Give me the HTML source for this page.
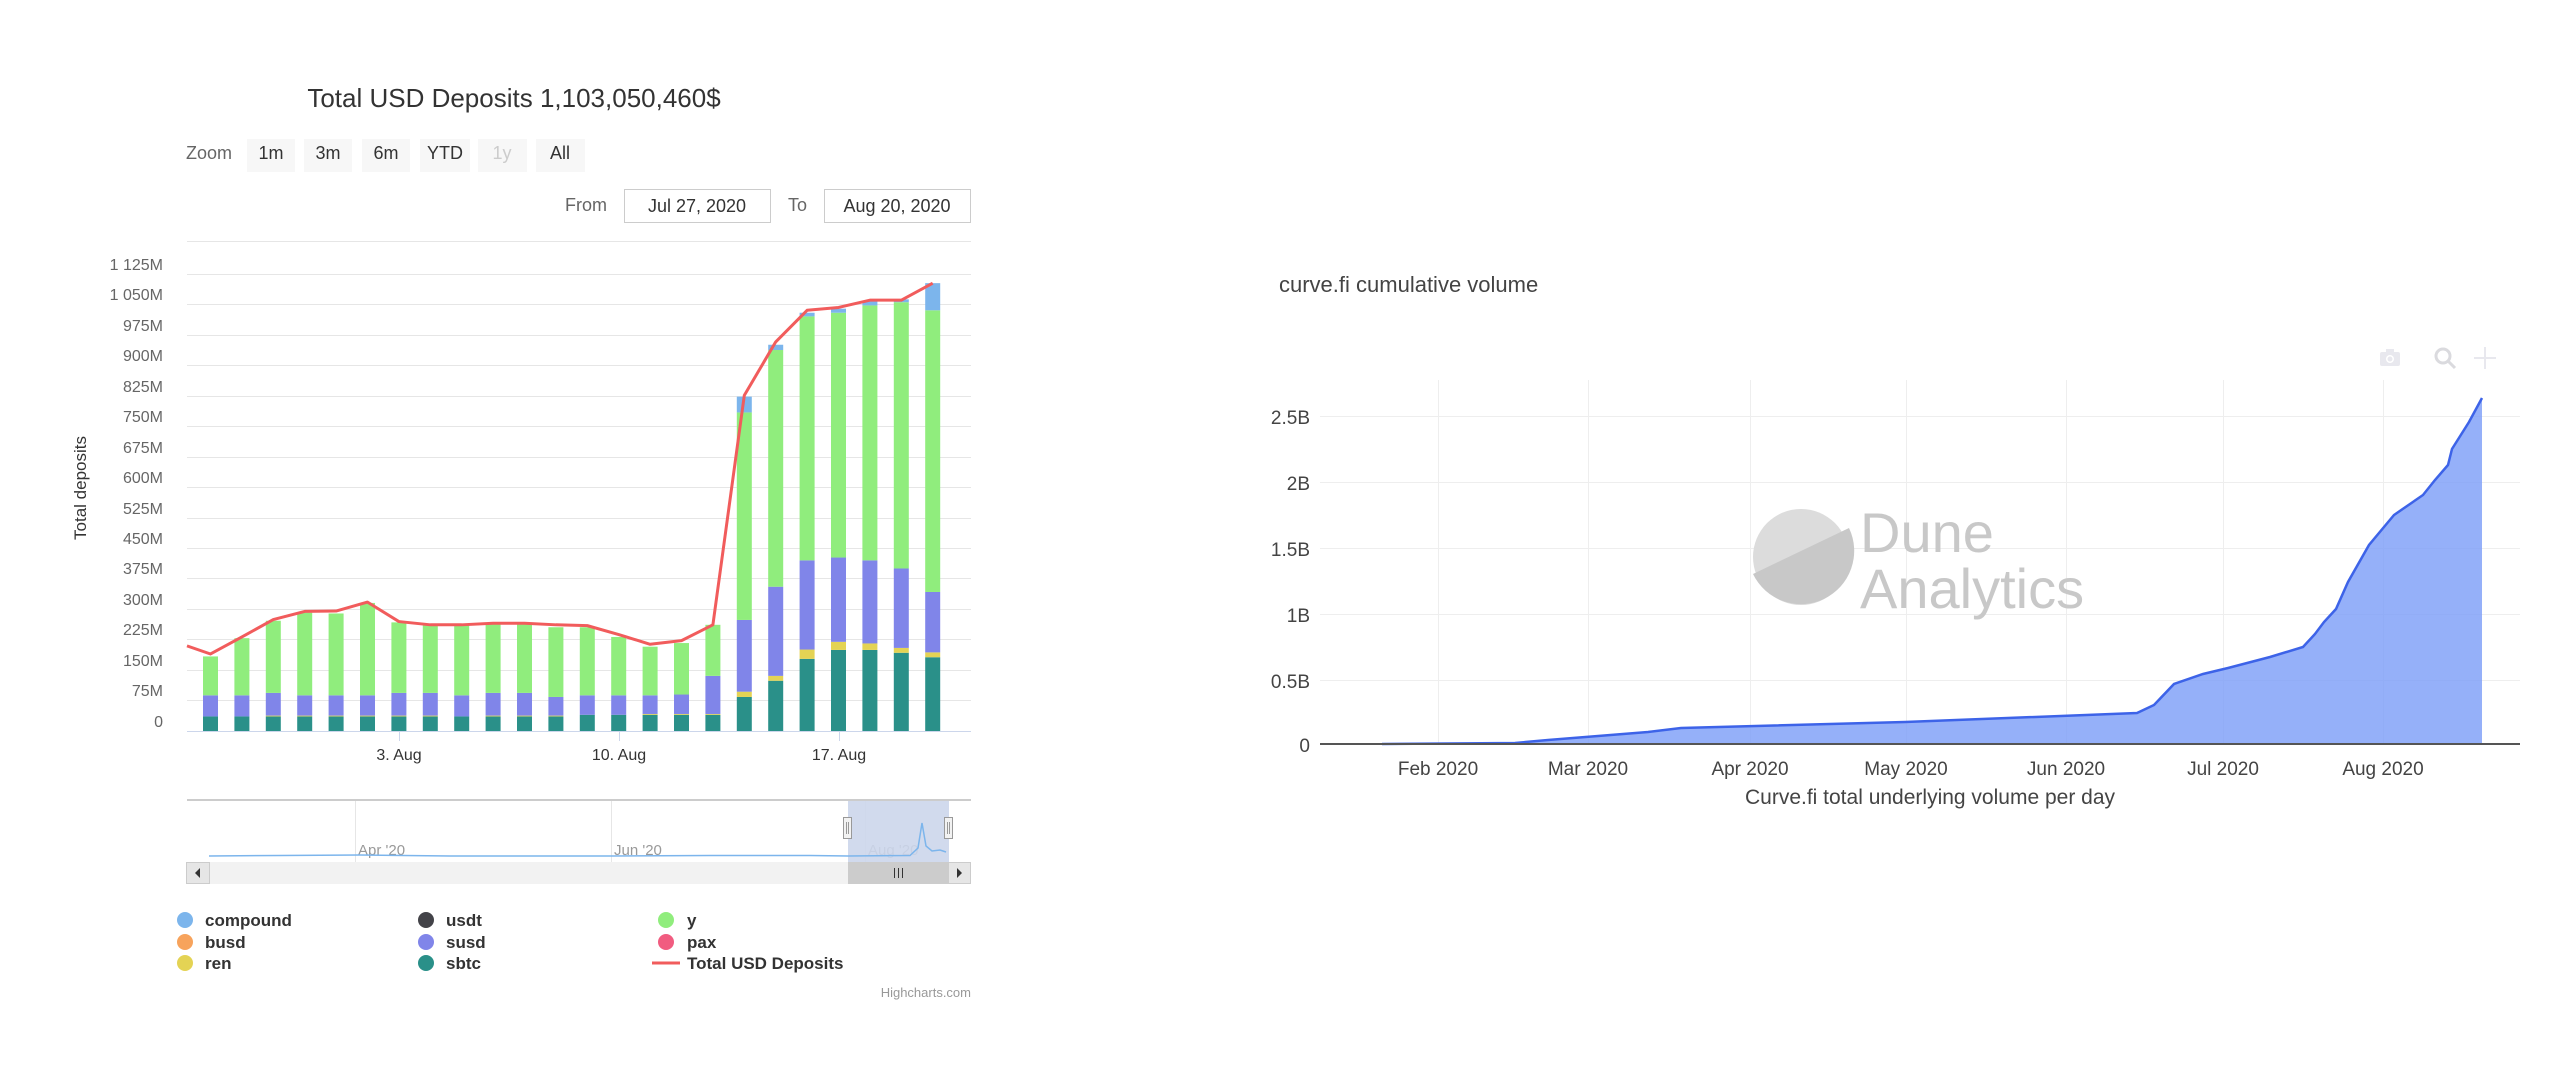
<!DOCTYPE html>
<html><head><meta charset="utf-8"><style>
html,body{margin:0;padding:0;background:#fff;}
svg{display:block;font-family:"Liberation Sans",sans-serif;}
</style></head><body>
<svg width="2552" height="1078" viewBox="0 0 2552 1078" xmlns="http://www.w3.org/2000/svg">
<rect width="2552" height="1078" fill="#fff"/>
<!-- LEFT CHART -->
<text x="514" y="107" text-anchor="middle" font-size="26" fill="#333">Total USD Deposits 1,103,050,460$</text>
<text x="186" y="159" font-size="18" fill="#666">Zoom</text>
<g font-size="18" fill="#333" text-anchor="middle">
<rect x="247" y="139" width="48" height="33" fill="#f7f7f7"/><text x="271" y="159">1m</text>
<rect x="304" y="139" width="48" height="33" fill="#f7f7f7"/><text x="328" y="159">3m</text>
<rect x="362" y="139" width="48" height="33" fill="#f7f7f7"/><text x="386" y="159">6m</text>
<rect x="420" y="139" width="50" height="33" fill="#f7f7f7"/><text x="445" y="159">YTD</text>
<rect x="478" y="139" width="49" height="33" fill="#f7f7f7"/><text x="502" y="159" fill="#ccc">1y</text>
<rect x="536" y="139" width="49" height="33" fill="#f7f7f7"/><text x="560" y="159">All</text>
</g>
<text x="565" y="211" font-size="18" fill="#666">From</text>
<rect x="624.5" y="189.5" width="146" height="33" fill="#fff" stroke="#ccc"/>
<text x="697" y="212" font-size="18" fill="#333" text-anchor="middle">Jul 27, 2020</text>
<text x="788" y="211" font-size="18" fill="#666">To</text>
<rect x="824.5" y="189.5" width="146" height="33" fill="#fff" stroke="#ccc"/>
<text x="897" y="212" font-size="18" fill="#333" text-anchor="middle">Aug 20, 2020</text>
<line x1="187" y1="241.5" x2="971" y2="241.5" stroke="#e6e6e6"/>
<g stroke="#e6e6e6">
<line x1="187" x2="971" y1="274.5" y2="274.5"/><line x1="187" x2="971" y1="304.5" y2="304.5"/><line x1="187" x2="971" y1="335.5" y2="335.5"/><line x1="187" x2="971" y1="365.5" y2="365.5"/><line x1="187" x2="971" y1="396.5" y2="396.5"/><line x1="187" x2="971" y1="426.5" y2="426.5"/><line x1="187" x2="971" y1="457.5" y2="457.5"/><line x1="187" x2="971" y1="487.5" y2="487.5"/><line x1="187" x2="971" y1="518.5" y2="518.5"/><line x1="187" x2="971" y1="548.5" y2="548.5"/><line x1="187" x2="971" y1="578.5" y2="578.5"/><line x1="187" x2="971" y1="609.5" y2="609.5"/><line x1="187" x2="971" y1="639.5" y2="639.5"/><line x1="187" x2="971" y1="670.5" y2="670.5"/><line x1="187" x2="971" y1="700.5" y2="700.5"/>
</g>
<g font-size="16" fill="#666" text-anchor="end">
<text x="163" y="270">1 125M</text><text x="163" y="300">1 050M</text><text x="163" y="331">975M</text><text x="163" y="361">900M</text><text x="163" y="392">825M</text><text x="163" y="422">750M</text><text x="163" y="453">675M</text><text x="163" y="483">600M</text><text x="163" y="514">525M</text><text x="163" y="544">450M</text><text x="163" y="574">375M</text><text x="163" y="605">300M</text><text x="163" y="635">225M</text><text x="163" y="666">150M</text><text x="163" y="696">75M</text><text x="163" y="727">0</text>
</g>
<text transform="translate(86,488) rotate(-90)" font-size="17" fill="#333" text-anchor="middle">Total deposits</text>
<g transform="translate(0,731) scale(1,-0.4053)">
<g id="b">
<rect x="203" y="0" width="15" height="36" fill="#2a9089"/><rect x="203" y="36" width="15" height="52" fill="#8085e9"/><rect x="203" y="88" width="15" height="96" fill="#90ed7d"/>
<rect x="234.4" y="0" width="15" height="36" fill="#2a9089"/><rect x="234.4" y="36" width="15" height="52" fill="#8085e9"/><rect x="234.4" y="88" width="15" height="141" fill="#90ed7d"/>
<rect x="265.8" y="0" width="15" height="36" fill="#2a9089"/><rect x="265.8" y="36" width="15" height="2" fill="#e4d354"/><rect x="265.8" y="38" width="15" height="56" fill="#8085e9"/><rect x="265.8" y="94" width="15" height="178" fill="#90ed7d"/>
<rect x="297.2" y="0" width="15" height="36" fill="#2a9089"/><rect x="297.2" y="36" width="15" height="2" fill="#e4d354"/><rect x="297.2" y="38" width="15" height="50" fill="#8085e9"/><rect x="297.2" y="88" width="15" height="204" fill="#90ed7d"/>
<rect x="328.6" y="0" width="15" height="36" fill="#2a9089"/><rect x="328.6" y="36" width="15" height="2" fill="#e4d354"/><rect x="328.6" y="38" width="15" height="50" fill="#8085e9"/><rect x="328.6" y="88" width="15" height="202" fill="#90ed7d"/>
<rect x="360" y="0" width="15" height="36" fill="#2a9089"/><rect x="360" y="36" width="15" height="2" fill="#e4d354"/><rect x="360" y="38" width="15" height="50" fill="#8085e9"/><rect x="360" y="88" width="15" height="228" fill="#90ed7d"/>
<rect x="391.4" y="0" width="15" height="36" fill="#2a9089"/><rect x="391.4" y="36" width="15" height="2" fill="#e4d354"/><rect x="391.4" y="38" width="15" height="56" fill="#8085e9"/><rect x="391.4" y="94" width="15" height="174" fill="#90ed7d"/>
<rect x="422.8" y="0" width="15" height="36" fill="#2a9089"/><rect x="422.8" y="36" width="15" height="2" fill="#e4d354"/><rect x="422.8" y="38" width="15" height="56" fill="#8085e9"/><rect x="422.8" y="94" width="15" height="168" fill="#90ed7d"/>
<rect x="454.2" y="0" width="15" height="36" fill="#2a9089"/><rect x="454.2" y="36" width="15" height="52" fill="#8085e9"/><rect x="454.2" y="88" width="15" height="174" fill="#90ed7d"/>
<rect x="485.6" y="0" width="15" height="36" fill="#2a9089"/><rect x="485.6" y="36" width="15" height="2" fill="#e4d354"/><rect x="485.6" y="38" width="15" height="56" fill="#8085e9"/><rect x="485.6" y="94" width="15" height="172" fill="#90ed7d"/>
<rect x="517" y="0" width="15" height="36" fill="#2a9089"/><rect x="517" y="36" width="15" height="2" fill="#e4d354"/><rect x="517" y="38" width="15" height="56" fill="#8085e9"/><rect x="517" y="94" width="15" height="172" fill="#90ed7d"/>
<rect x="548.4" y="0" width="15" height="36" fill="#2a9089"/><rect x="548.4" y="36" width="15" height="2" fill="#e4d354"/><rect x="548.4" y="38" width="15" height="46" fill="#8085e9"/><rect x="548.4" y="84" width="15" height="172" fill="#90ed7d"/>
<rect x="579.8" y="0" width="15" height="40" fill="#2a9089"/><rect x="579.8" y="40" width="15" height="48" fill="#8085e9"/><rect x="579.8" y="88" width="15" height="168" fill="#90ed7d"/>
<rect x="611.2" y="0" width="15" height="40" fill="#2a9089"/><rect x="611.2" y="40" width="15" height="48" fill="#8085e9"/><rect x="611.2" y="88" width="15" height="144" fill="#90ed7d"/>
<rect x="642.6" y="0" width="15" height="40" fill="#2a9089"/><rect x="642.6" y="40" width="15" height="2" fill="#e4d354"/><rect x="642.6" y="42" width="15" height="46" fill="#8085e9"/><rect x="642.6" y="88" width="15" height="120" fill="#90ed7d"/>
<rect x="674" y="0" width="15" height="40" fill="#2a9089"/><rect x="674" y="40" width="15" height="2" fill="#e4d354"/><rect x="674" y="42" width="15" height="48" fill="#8085e9"/><rect x="674" y="90" width="15" height="127" fill="#90ed7d"/>
<rect x="705.4" y="0" width="15" height="40" fill="#2a9089"/><rect x="705.4" y="40" width="15" height="2" fill="#e4d354"/><rect x="705.4" y="42" width="15" height="94" fill="#8085e9"/><rect x="705.4" y="136" width="15" height="126" fill="#90ed7d"/>
<rect x="736.8" y="0" width="15" height="84" fill="#2a9089"/><rect x="736.8" y="84" width="15" height="13" fill="#e4d354"/><rect x="736.8" y="97" width="15" height="177" fill="#8085e9"/><rect x="736.8" y="274" width="15" height="512" fill="#90ed7d"/><rect x="736.8" y="786" width="15" height="39" fill="#7cb5ec"/>
<rect x="768.2" y="0" width="15" height="124" fill="#2a9089"/><rect x="768.2" y="124" width="15" height="12" fill="#e4d354"/><rect x="768.2" y="136" width="15" height="220" fill="#8085e9"/><rect x="768.2" y="356" width="15" height="584" fill="#90ed7d"/><rect x="768.2" y="940" width="15" height="13" fill="#7cb5ec"/>
<rect x="799.6" y="0" width="15" height="178" fill="#2a9089"/><rect x="799.6" y="178" width="15" height="23" fill="#e4d354"/><rect x="799.6" y="201" width="15" height="220" fill="#8085e9"/><rect x="799.6" y="421" width="15" height="602" fill="#90ed7d"/><rect x="799.6" y="1023" width="15" height="9" fill="#7cb5ec"/>
<rect x="831" y="0" width="15" height="200" fill="#2a9089"/><rect x="831" y="200" width="15" height="20" fill="#e4d354"/><rect x="831" y="220" width="15" height="208" fill="#8085e9"/><rect x="831" y="428" width="15" height="604" fill="#90ed7d"/><rect x="831" y="1032" width="15" height="10" fill="#7cb5ec"/>
<rect x="862.4" y="0" width="15" height="200" fill="#2a9089"/><rect x="862.4" y="200" width="15" height="16" fill="#e4d354"/><rect x="862.4" y="216" width="15" height="205" fill="#8085e9"/><rect x="862.4" y="421" width="15" height="629" fill="#90ed7d"/><rect x="862.4" y="1050" width="15" height="10" fill="#7cb5ec"/>
<rect x="893.8" y="0" width="15" height="193" fill="#2a9089"/><rect x="893.8" y="193" width="15" height="12" fill="#e4d354"/><rect x="893.8" y="205" width="15" height="196" fill="#8085e9"/><rect x="893.8" y="401" width="15" height="657" fill="#90ed7d"/><rect x="893.8" y="1058" width="15" height="7" fill="#7cb5ec"/>
<rect x="925.2" y="0" width="15" height="182" fill="#2a9089"/><rect x="925.2" y="182" width="15" height="12" fill="#e4d354"/><rect x="925.2" y="194" width="15" height="149" fill="#8085e9"/><rect x="925.2" y="343" width="15" height="695" fill="#90ed7d"/><rect x="925.2" y="1038" width="15" height="67" fill="#7cb5ec"/>
</g>
<polyline fill="none" stroke="#f15c5c" stroke-width="3" vector-effect="non-scaling-stroke" stroke-linejoin="round" points="187,210 210.5,190 241.9,232 273.3,275 304.7,295 336.1,296 367.5,318 398.9,270 430.3,262 461.7,262 493.1,266 524.5,266 555.9,262 587.3,260 618.7,238 650.1,214 681.5,223 712.9,262 744.3,828 775.7,960 807.1,1038 838.5,1045 869.9,1063 901.3,1063 932.7,1105"/>
</g>
<line x1="187" y1="731.5" x2="971" y2="731.5" stroke="#ccd6eb"/>
<g stroke="#ccd6eb"><line x1="399.5" x2="399.5" y1="731" y2="741"/><line x1="619.5" x2="619.5" y1="731" y2="741"/><line x1="839.5" x2="839.5" y1="731" y2="741"/></g>
<g font-size="16" fill="#333" text-anchor="middle"><text x="399" y="760">3. Aug</text><text x="619" y="760">10. Aug</text><text x="839" y="760">17. Aug</text></g>
<!-- navigator -->
<line x1="187" y1="800" x2="971" y2="800" stroke="#ccc" stroke-width="2"/>
<g stroke="#e6e6e6"><line x1="355.5" x2="355.5" y1="801" y2="862"/><line x1="611.5" x2="611.5" y1="801" y2="862"/><line x1="865.5" x2="865.5" y1="801" y2="862"/></g>
<g font-size="15" fill="#999"><text x="358" y="855">Apr '20</text><text x="614" y="855">Jun '20</text><text x="868" y="855">Aug '20</text></g>
<rect x="848" y="801" width="101" height="61" fill="#ccd6eb" opacity="0.9"/>
<polyline fill="none" stroke="#7cb5ec" stroke-width="1.5" points="209,856 280,855.5 360,855 450,856 611,856 710,855.5 810,855.5 848,856 910,855.5 918,848 922,823 926,846 932,851 940,850 946,852"/>
<rect x="843.5" y="817.5" width="8" height="21" fill="#f2f2f2" stroke="#999"/><rect x="944.5" y="817.5" width="8" height="21" fill="#f2f2f2" stroke="#999"/>
<g stroke="#999"><line x1="846.5" x2="846.5" y1="822" y2="834"/><line x1="848.5" x2="848.5" y1="822" y2="834"/><line x1="947.5" x2="947.5" y1="822" y2="834"/><line x1="949.5" x2="949.5" y1="822" y2="834"/></g>
<rect x="186" y="862" width="785" height="22" fill="#f2f2f2"/>
<rect x="186.5" y="862.5" width="23" height="21" fill="#e6e6e6" stroke="#ccc"/><path d="M200 868 L195 873 L200 878 Z" fill="#333"/>
<rect x="948.5" y="862.5" width="22" height="21" fill="#e6e6e6" stroke="#ccc"/><path d="M957 868 L962 873 L957 878 Z" fill="#333"/>
<rect x="848" y="862" width="100" height="22" fill="#ccc"/>
<g stroke="#333"><line x1="894.5" x2="894.5" y1="868" y2="878"/><line x1="898.5" x2="898.5" y1="868" y2="878"/><line x1="902.5" x2="902.5" y1="868" y2="878"/></g>
<!-- legend -->
<g font-size="17" font-weight="bold" fill="#333">
<circle cx="185" cy="920" r="8" fill="#7cb5ec"/><text x="205" y="926">compound</text>
<circle cx="185" cy="942" r="8" fill="#f7a35c"/><text x="205" y="948">busd</text>
<circle cx="185" cy="963" r="8" fill="#e4d354"/><text x="205" y="969">ren</text>
<circle cx="426" cy="920" r="8" fill="#434348"/><text x="446" y="926">usdt</text>
<circle cx="426" cy="942" r="8" fill="#8085e9"/><text x="446" y="948">susd</text>
<circle cx="426" cy="963" r="8" fill="#2a9089"/><text x="446" y="969">sbtc</text>
<circle cx="666" cy="920" r="8" fill="#90ed7d"/><text x="687" y="926">y</text>
<circle cx="666" cy="942" r="8" fill="#f15c80"/><text x="687" y="948">pax</text>
<line x1="652" x2="680" y1="963" y2="963" stroke="#f15c5c" stroke-width="3"/><text x="687" y="969">Total USD Deposits</text>
</g>
<text x="971" y="997" font-size="13" fill="#999" text-anchor="end">Highcharts.com</text>

<!-- RIGHT CHART -->
<text x="1279" y="292" font-size="22" fill="#444">curve.fi cumulative volume</text>
<g fill="#e8e8ee">
<rect x="2380" y="352" width="20" height="14" rx="2"/><rect x="2386" y="349" width="8" height="4"/><circle cx="2390" cy="359" r="4" fill="#fff"/><circle cx="2390" cy="359" r="2.5"/>
<circle cx="2443" cy="356" r="7" fill="none" stroke="#dadade" stroke-width="3"/><line x1="2448" y1="361" x2="2455" y2="368" stroke="#dadade" stroke-width="3"/>
<path d="M2485 347 V369 M2474 358 H2496" stroke="#e8e8ee" stroke-width="2"/>
</g>
<g stroke="#eee">
<line x1="1438.5" x2="1438.5" y1="380" y2="744"/><line x1="1588.5" x2="1588.5" y1="380" y2="744"/><line x1="1750.5" x2="1750.5" y1="380" y2="744"/><line x1="1906.5" x2="1906.5" y1="380" y2="744"/><line x1="2066.5" x2="2066.5" y1="380" y2="744"/><line x1="2223.5" x2="2223.5" y1="380" y2="744"/><line x1="2383.5" x2="2383.5" y1="380" y2="744"/>
<line x1="1320" x2="2520" y1="416.5" y2="416.5"/><line x1="1320" x2="2520" y1="482.5" y2="482.5"/><line x1="1320" x2="2520" y1="548.5" y2="548.5"/><line x1="1320" x2="2520" y1="614.5" y2="614.5"/><line x1="1320" x2="2520" y1="680.5" y2="680.5"/>
</g>
<g font-size="19" fill="#444" text-anchor="end">
<text x="1310" y="424">2.5B</text><text x="1310" y="490">2B</text><text x="1310" y="556">1.5B</text><text x="1310" y="622">1B</text><text x="1310" y="688">0.5B</text><text x="1310" y="752">0</text>
</g>
<!-- watermark -->
<circle cx="1801" cy="557" r="48" fill="#dcdcdc"/>
<path d="M1753 574 L1849 528 A48 48 0 0 1 1753 574 Z" fill="#c8c8c8"/>
<text x="1860" y="552" font-size="56" fill="#c8c8c8">Dune</text>
<text x="1860" y="608" font-size="56" fill="#c8c8c8">Analytics</text>
<path d="M1382 744 L1515 743 L1548 740 L1648 732 L1681 728 L1905 722 L2137 713 L2154 705 L2174 684 L2203 674 L2228 668 L2270 657 L2303 647 L2315 634 L2324 622 L2336 609 L2348 582 L2369 545 L2394 515 L2423 495 L2435 480 L2448 465 L2452 449 L2469 422 L2482 398 L2482 744 Z" fill="#7b9cf8" fill-opacity="0.8"/>
<path d="M1382 744 L1515 743 L1548 740 L1648 732 L1681 728 L1905 722 L2137 713 L2154 705 L2174 684 L2203 674 L2228 668 L2270 657 L2303 647 L2315 634 L2324 622 L2336 609 L2348 582 L2369 545 L2394 515 L2423 495 L2435 480 L2448 465 L2452 449 L2469 422 L2482 398" fill="none" stroke="#3d63e8" stroke-width="2.5"/>
<line x1="1320" x2="2520" y1="744" y2="744" stroke="#555" stroke-width="2"/>
<g font-size="19" fill="#444" text-anchor="middle">
<text x="1438" y="775">Feb 2020</text><text x="1588" y="775">Mar 2020</text><text x="1750" y="775">Apr 2020</text><text x="1906" y="775">May 2020</text><text x="2066" y="775">Jun 2020</text><text x="2223" y="775">Jul 2020</text><text x="2383" y="775">Aug 2020</text>
</g>
<text x="1930" y="804" font-size="21" fill="#444" text-anchor="middle">Curve.fi total underlying volume per day</text>
</svg>
</body></html>
